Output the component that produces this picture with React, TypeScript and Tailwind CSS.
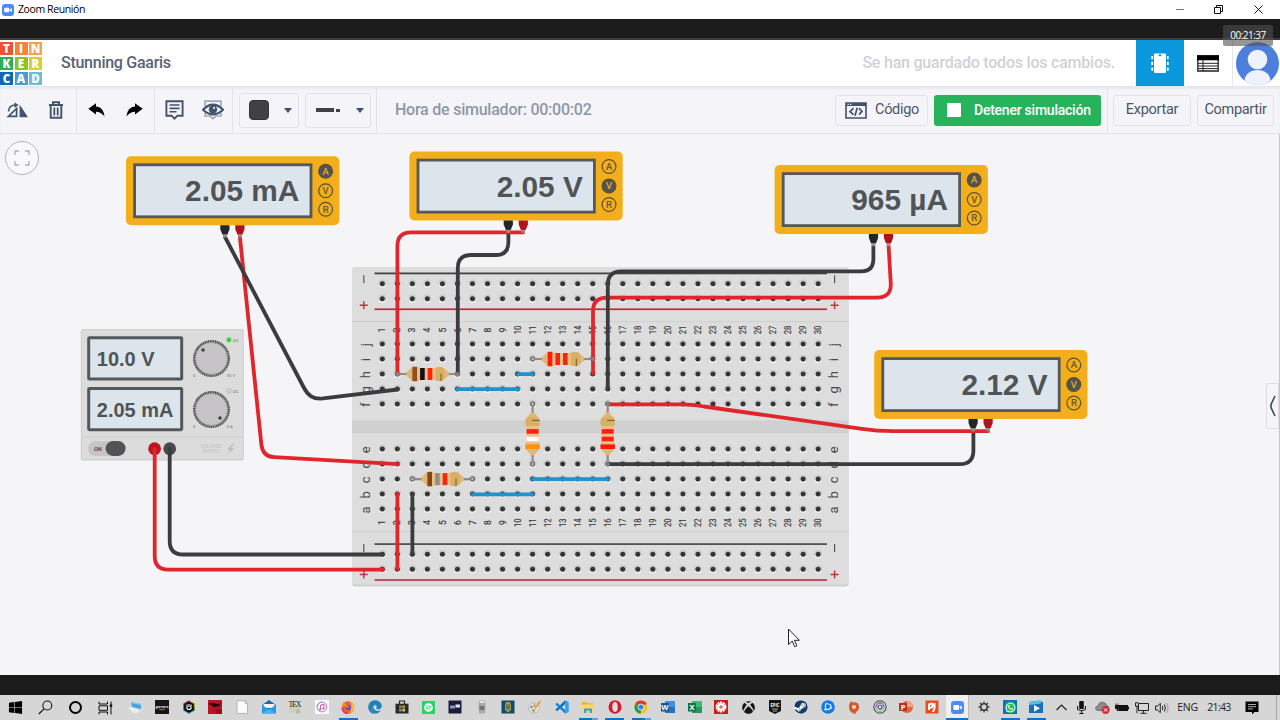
import type { ReactNode } from 'react';
import { FaWindows, FaSpotify, FaXbox, FaSteam, FaWhatsapp, FaEdge } from 'react-icons/fa';

const PITCH = 15.03;
const colX = (n: number) => 382.3 + (n - 1) * PITCH;
const rowY: Record<string, number> = {
  j: 343.9, i: 358.9, h: 373.9, g: 389, f: 404,
  e: 449, d: 464, c: 479.1, b: 494.1, a: 509.1,
};
const rails = [283.7, 298.7, 554.3, 569.3];
const columns = Array.from({ length: 30 }, (_, i) => i + 1);

const RED = '#e0262c';
const BLACK = '#3b3c3f';
const BLUE = '#2092cc';

function Hole({ x, y }: { x: number; y: number }) {
  return (
    <g>
      <circle cx={x} cy={y - 0.3} r={3.9} fill="#cbcbcc" />
      <ellipse cx={x} cy={y + 2} rx={3.4} ry={2} fill="#ededed" />
      <circle cx={x} cy={y} r={2.5} fill="#353538" />
    </g>
  );
}

function Breadboard() {
  return (
    <g>
      <rect x="352" y="267" width="496.5" height="319.5" rx="3" fill="#cfcfd0" />
      <rect x="352" y="267" width="496.5" height="317.5" rx="3" fill="#dddddd" />
      <rect x="352" y="420.5" width="496.5" height="12.5" fill="#d0d0d1" />
      <rect x="352" y="321" width="496.5" height="1.2" fill="#d0d1d3" />
      <rect x="352" y="531" width="496.5" height="1.2" fill="#d0d1d3" />
      <rect x="374.5" y="272.5" width="452.5" height="1.8" fill="#434347" />
      <rect x="374.5" y="308.4" width="452.5" height="1.7" fill="#b62c3d" />
      <rect x="374.5" y="543.2" width="452.5" height="1.8" fill="#525256" />
      <rect x="374.5" y="579.2" width="452.5" height="1.7" fill="#bd3949" />
      {[363.8, 834.6].map((x) => (
        <g key={x}>
          <path d={`M${x} 275.2v8M${x} 544v8`} stroke="#57575a" strokeWidth="1.2" />
          <path d={`M${x} 301.2v8M${x - 4} 305.2h8M${x} 570.5v8M${x - 4} 574.5h8`} stroke="#c22f40" strokeWidth="1.4" />
        </g>
      ))}
      {Object.entries(rowY).map(([name, y]) =>
        [369.5, 838].map((x) => (
          <text key={name + x} transform={`translate(${x} ${y + 0.8}) rotate(-90)`} textAnchor="middle" fontSize="13" fill="#4a4a4d" fontFamily="Roboto, sans-serif">
            {name}
          </text>
        )),
      )}
      {columns.map((n) =>
        [330, 522.7].map((y) => (
          <text key={`${n}-${y}`} transform={`translate(${colX(n) + 3.1} ${y}) rotate(-90)`} textAnchor="middle" fontSize="8.6" textLength={n > 9 ? 8.6 : undefined} lengthAdjust="spacingAndGlyphs" fill="#333336" stroke="#333336" strokeWidth="0.15" fontFamily="Roboto, sans-serif">
            {n}
          </text>
        )),
      )}
      {columns.map((n) => [...rails, ...Object.values(rowY)].map((y) => <Hole key={`${n}-${y}`} x={colX(n)} y={y} />))}
    </g>
  );
}

function Resistor({ x, y, bands, vertical = false }: { x: number; y: number; bands: string[]; vertical?: boolean }) {
  return (
    <g transform={`translate(${x} ${y})${vertical ? ' rotate(-90)' : ''}`}>
      <path d="M-30 0H30" stroke="#8f8c8c" strokeWidth="2.2" strokeLinecap="round" />
      <circle cx="-30" cy="0" r="2.4" fill="#85827f" />
      <circle cx="30" cy="0" r="2.4" fill="#85827f" />
      <circle cx="-30" cy="0" r="1" fill="#c9c7c6" />
      <circle cx="30" cy="0" r="1" fill="#c9c7c6" />
      <path d="M-21 -2C-18 -3-17 -7-13 -7.3C-10 -7.5-9 -6-6 -6H6C9 -6 10 -7.3 13 -7.3C17 -7.3 18 -3 21.5 -2V2C18 3 17 7.3 13 7.3C10 7.3 9 6 6 6H-6C-9 6-10 7.5-13 7.3C-17 7-18 3-21 2Z" fill="#dfb878" />
      <path d="M-10 -6H9V6H-10Z" fill="#eec391" opacity="0.7" />
      <rect x="-15" y="-7.2" width="4.6" height="14.4" fill={bands[0]} />
      <rect x="-7.3" y="-6" width="4.6" height="12" fill={bands[1]} />
      <rect x="0.3" y="-6" width="4.6" height="12" fill={bands[2]} />
      <path d="M8 -6.3Q13 -8.4 17 -5V5Q13 8.4 8 6.3Z" fill="#d8b065" />
      <path d="M13.6 -.5V7" stroke="#80602b" strokeWidth="1.1" />
    </g>
  );
}

function Multimeter({ x, y, value, mode }: { x: number; y: number; value: string; mode: string }) {
  return (
    <g transform={`translate(${x} ${y})`}>
      <rect width="213.3" height="69" rx="5" fill="#f3ae1b" />
      <rect x="8.6" y="8.6" width="176.4" height="52" fill="#dce5eb" stroke="#55585b" strokeWidth="2.8" />
      <text x="173.4" y="45" textAnchor="end" fontSize="29.8" fontWeight="700" fill="#515457" fontFamily="'Liberation Sans', sans-serif">
        {value}
      </text>
      {['A', 'V', 'R'].map((m, i) => (
        <g key={m} transform={`translate(199.6 ${[15, 34.5, 53][i]})`}>
          <circle r="6.9" fill={m === mode ? '#525355' : 'none'} stroke="#5a5136" strokeWidth="1.2" />
          <text y="3.4" textAnchor="middle" fontSize="9.5" fill={m === mode ? '#f3ae1b' : '#5a5136'} stroke={m === mode ? '#f3ae1b' : '#5a5136'} strokeWidth="0.2" fontFamily="Roboto, sans-serif">
            {m}
          </text>
        </g>
      ))}
    </g>
  );
}

function Probes({ x, y }: { x: number; y: number }) {
  return (
    <g>
      {[{ dx: 98.9, c: '#252627' }, { dx: 113.9, c: '#b0141b' }].map(({ dx, c }) => (
        <g key={c} transform={`translate(${x + dx} ${y + 69})`}>
          <path d="M-4.6 0H4.6V4L2.4 9.5H-2.4L-4.6 4Z" fill={c} />
          <rect x="-1.8" y="9.3" width="3.6" height="3" fill="#9b8b8b" />
        </g>
      ))}
    </g>
  );
}

function Knob({ y, dot, max, on }: { y: number; dot: [number, number]; max: string; on: boolean }) {
  return (
    <g transform={`translate(211.5 ${y})`}>
      <circle r="17.2" fill="#c6c4c7" stroke="#47484a" strokeWidth="2.6" strokeDasharray="1.2 .55" />
      <circle r="16" fill="#c6c4c7" stroke="#8b8a8d" strokeWidth=".6" />
      <circle cx={dot[0]} cy={dot[1]} r="1.8" fill="#414245" />
      <circle cx="17.4" cy={-18.6} r="2.3" fill={on ? '#2fd62f' : '#d5d5d5'} stroke={on ? '#66dc63' : '#aaa'} strokeWidth=".6" />
      <g fontFamily="Roboto, sans-serif" fontSize="4.4" fill="#747476">
        <text x="21.5" y="-17">DC</text>
        <text x="-18.5" y="18.5">0</text>
        <text x="15" y="18.5">{max}</text>
      </g>
    </g>
  );
}

function PowerSupply() {
  return (
    <g>
      <rect x="80.8" y="329" width="163" height="131.5" rx="2.5" fill="#cfcfd0" />
      <rect x="81.8" y="330" width="161" height="129" rx="2" fill="#dcdcdc" />
      <rect x="81.8" y="436.4" width="161" height="1" fill="#cfcfd0" />
      {[{ y: 336.3, t: '10.0 V' }, { y: 387, t: '2.05 mA' }].map(({ y, t }) => (
        <g key={t}>
          <rect x="88.7" y={y + 1.4} width="93" height="41.3" rx=".6" fill="#dce5eb" stroke="#55585b" strokeWidth="3" />
          <text x="96.8" y={y + 29.5} fontSize="20" fontWeight="700" fill="#515457" fontFamily="'Liberation Sans', sans-serif">
            {t}
          </text>
        </g>
      ))}
      <Knob y={358.5} dot={[-8.5, -8.5]} max="30 V" on />
      <Knob y={409.5} dot={[8.5, 8.5]} max="5 A" on={false} />
      <rect x="88" y="441.3" width="37" height="14.6" rx="7.3" fill="#c5c5c8" />
      <text x="94" y="451.2" fontSize="5.6" fontWeight="700" fill="#4c4d50" fontFamily="Roboto, sans-serif">ON</text>
      <rect x="105.6" y="441" width="20" height="15" rx="7.4" fill="#525355" />
      <circle cx="154.6" cy="448.7" r="6.4" fill="#bd161e" />
      <circle cx="169.7" cy="448.7" r="6.4" fill="#4b4b4e" />
      <g fontFamily="Roboto, sans-serif" fontSize="5" fontWeight="500" fill="#c4c4c7" textAnchor="middle">
        <text x="211" y="447.6">VOLTAGE</text>
        <text x="211" y="453.2">SUPPLY</text>
      </g>
      <path d="M233 443.5l-6 6.2h3.6l-3.2 4.5 7.2-6h-3.8l3.6-4.7z" fill="#bcbcbf" />
    </g>
  );
}

function Wire({ d, color }: { d: string; color: string }) {
  return <path d={d} fill="none" stroke={color} strokeWidth="3.8" strokeLinecap="round" strokeLinejoin="round" />;
}

const meters = [
  { x: 126, y: 156.2, value: '2.05 mA', mode: 'A' },
  { x: 409.4, y: 151.5, value: '2.05 V', mode: 'V' },
  { x: 774.6, y: 165, value: '965 µA', mode: 'A' },
  { x: 874.2, y: 350, value: '2.12 V', mode: 'V' },
];

function Circuit() {
  return (
    <svg className="block h-[541px] w-[1280px]" viewBox="0 134 1280 541">
      <Breadboard />
      <PowerSupply />
      {meters.map((m) => <Multimeter key={m.x} {...m} />)}
      <Resistor x={427.4} y={374} bands={['#8f4f21', '#111', '#ff2410']} />
      <Resistor x={562.7} y={359} bands={['#ff1a0a', '#ff2410', '#ff2410']} />
      <Resistor x={442.4} y={479.1} bands={['#85431c', '#8d8d8d', '#ff2410']} />
      <Resistor x={532.6} y={434} bands={['#ff930f', '#fff', '#ff2016']} vertical />
      <Resistor x={607.7} y={434} bands={['#ff1a0a', '#ff2410', '#ff2016']} vertical />
      <Wire color={BLUE} d="M457.5 389.2H518.5" />
      <Wire color={BLUE} d="M518 374.1H533" />
      <Wire color={BLUE} d="M533 479.2H608" />
      <Wire color={BLUE} d="M472.5 494.3H532.7" />
      <Wire color={RED} d="M397.4 494V569" />
      <Wire color={BLACK} d="M412.4 494V554.5" />
      <Wire color={BLACK} d="M508.4 231V242Q508.4 255 496 255H471Q457.8 255 457.8 268V373.5" />
      <Wire color={RED} d="M523 232.4H411Q397.4 232.4 397.4 246V373.5" />
      <Wire color={RED} d="M239.9 237L261.3 444Q262.5 456.5 274 457.2L398 464.2" />
      <Wire color={BLACK} d="M225 237L303 386C308 396 313 399.3 323 398.4L397.5 389.5" />
      <Wire color={RED} d="M888.6 246L890.8 284Q891 297.6 877 297.6H607Q593 297.6 593 311V373.5" />
      <Wire color={BLACK} d="M873.4 246V259Q873.4 271.4 861 271.4H621Q607.8 271.4 607.8 285V389" />
      <Wire color={BLACK} d="M973.4 430V451Q973 464.2 960 464.2H608.5" />
      <Wire color={RED} d="M988 431.2H893Q877 431 862 428.8L704 406.5Q693 404.3 680 404.3H609" />
      <Wire color={RED} d="M154.7 449V556Q154.7 569.6 168 569.6H383" />
      <Wire color={BLACK} d="M169.7 449V541Q169.7 554.5 183 554.5H383" />
      {meters.map((m) => <Probes key={m.x} x={m.x} y={m.y} />)}
      <g fill="#858284">
        {[[397.4, 374], [457.8, 374], [592.9, 359], [607.8, 404], [607.8, 464.2]].map(([x, y]) => (
          <circle key={`${x}${y}`} cx={x} cy={y} r="2" />
        ))}
      </g>
      <path d="M788.5 629v15.6l3.7-3.5 2.5 5.6 2.2-1-2.5-5.4h5z" fill="#fff" stroke="#222" strokeWidth="1" />
    </svg>
  );
}

const logo = [
  ['T', 'bg-[#f2512f]'], ['I', 'bg-[#f6803e]'], ['N', 'bg-[#f9a04f]'],
  ['K', 'bg-[#2fae55]'], ['E', 'bg-[#8fc31f]'], ['R', 'bg-[#d9cc3c]'],
  ['C', 'bg-[#0f68b4]'], ['A', 'bg-[#4a9bd0]'], ['D', 'bg-[#6fbbd8]'],
];

function Header() {
  return (
    <header className="flex h-[47px] shrink-0 items-stretch border-b border-[#e3e3e8] bg-white">
      <div className="mt-[2px] grid h-[43px] w-[42px] grid-cols-3 grid-rows-3 gap-[1.5px]">
        {logo.map(([letter, bg]) => (
          <span key={letter} className={`flex items-center justify-center font-['Open_Sans',sans-serif] text-[11.5px] leading-none font-extrabold text-white ${bg}`}>
            {letter}
          </span>
        ))}
      </div>
      <h1 className="ml-[19px] flex-1 self-center text-[16px] font-medium tracking-[-0.27px] text-[#596375]">Stunning Gaaris</h1>
      <p className="mr-[21px] self-center text-[16px] font-medium tracking-[-0.22px] text-[#ced2d9]">Se han guardado todos los cambios.</p>
      <div className="flex w-[48px] items-center justify-center bg-[#0a97dc]">
        <svg width="20" height="22" viewBox="0 0 20 22">
          <rect x="4" y="1.5" width="12" height="19.5" rx="1.2" fill="#fff" />
          <path d="M8.5 2.5h3v1.6h-3z" fill="#0a97dc" />
          <path d="M2.2 4v15M17.8 4v15" stroke="#fff" strokeWidth="1.8" strokeDasharray="3.2 2.6" />
        </svg>
      </div>
      <div className="flex w-[49px] items-center justify-center border-r border-[#e6e6ea]">
        <svg width="22" height="17" viewBox="0 0 22 17">
          <path d="M.8 1h20.4v15H.8z" fill="#fff" stroke="#222" strokeWidth="1.3" />
          <path d="M0 .3h22v5H0z" fill="#000" />
          <path d="M1 8.300h20M1 11h20M1 13.600h20M6 5v11" stroke="#222" strokeWidth="1" />
        </svg>
      </div>
      <div className="flex w-[47px] items-center overflow-hidden pl-[3px]">
        <svg width="44" height="43" viewBox="0 0 44 43">
          <circle cx="21.5" cy="21.5" r="21.5" fill="#4b7fdb" />
          <circle cx="21.5" cy="17.500" r="9.8" fill="#eef2fc" />
          <path d="M8.5 38.5c1-14 25-14 26 0q-13 9-26 0z" fill="#eef2fc" />
        </svg>
      </div>
    </header>
  );
}

function Caret() {
  return <span className="h-0 w-0 border-x-4 border-t-5 border-x-transparent border-t-[#3f5370]" />;
}

function Toolbar() {
  return (
    <div className="flex h-[47px] shrink-0 items-center border-b border-[#e3e3e9] bg-[#f5f5f9] text-[#4a5568] shadow-[inset_0_2px_2px_rgba(200,200,215,0.25)]">
      <div className="flex h-full w-[77px] items-center border-r border-[#e3e3e9] pl-[6px]">
        <svg width="23" height="17" viewBox="0 0 23 17">
          <path d="M13.6 2.4L22 15.2H13.6z" fill="#42526a" />
          <path d="M10.6 6.5L2.4 14.4h8.2z" fill="none" stroke="#42526a" strokeWidth="1.7" />
          <path d="M2.5 9.5Q3 3 9.6 3" fill="none" stroke="#42526a" strokeWidth="1.6" />
          <path d="M8.5 .2l4 2.8-4 2.9z" fill="#42526a" />
        </svg>
        <svg className="ml-[19px]" width="16" height="18" viewBox="0 0 16 18">
          <path d="M1 4h14M5 3.5V1.2h6v2.3M2.7 4.5v12.2h10.6V4.5" fill="none" stroke="#42526a" strokeWidth="1.9" />
          <path d="M6.3 6.5v8M9.7 6.5v8" stroke="#42526a" strokeWidth="1.8" />
        </svg>
      </div>
      <div className="flex h-full w-[78px] items-center border-r border-[#e3e3e9] pl-[11px] text-black">
        <svg width="17" height="14" viewBox="0 0 17 14">
          <path d="M.3 5.700L8 .3v3.300Q15.500 4.200 16.600 13.500 13 8.800 8 8.800v2.700z" fill="#000" />
        </svg>
        <svg className="ml-[21px]" width="17" height="14" viewBox="0 0 17 14">
          <path d="M16.700 5.700L9 .3v3.300Q1.500 4.200 .4 13.500 4 8.800 9 8.800v2.700z" fill="#000" />
        </svg>
      </div>
      <div className="flex h-full w-[78px] items-center border-r border-[#e3e3e9] pl-[10px]">
        <svg width="19" height="20" viewBox="0 0 19 20">
          <path d="M1.4 1.2h16.2v14.5h-5.2L9.5 18.6l-2.9-2.9H1.4z" fill="none" stroke="#42526a" strokeWidth="1.9" />
          <path d="M4.5 5h10M4.5 8.4h10M4.5 11.8h7" stroke="#42526a" strokeWidth="1.6" />
        </svg>
        <svg className="ml-[18px]" width="22" height="20" viewBox="0 0 22 20">
          <path d="M3 6V1.2h16V6M3 13v3h5l3 2.7 3-2.7h5v-3" fill="none" stroke="#a0aab7" strokeWidth="1.7" />
          <path d="M1 9.7Q11-.5 21 9.7Q11 19 1 9.7z" fill="#f5f5f9" stroke="#42526a" strokeWidth="2.200" />
          <circle cx="11" cy="9.400" r="4.2" fill="#42526a" />
          <circle cx="12" cy="8" r="1.1" fill="#f5f5f9" />
        </svg>
      </div>
      <div className="flex h-full w-[144px] items-center gap-[6px] border-r border-[#e3e3e9] pl-[6px]">
        <div className="flex h-[35px] w-[60px] items-center rounded-[3px] border border-[#e2e2e8] pl-[9px]">
          <span className="mr-[15px] h-[20px] w-[20px] rounded-[4px] border border-[#333437] bg-[#404144]" />
          <Caret />
        </div>
        <div className="flex h-[35px] w-[66px] items-center rounded-[3px] border border-[#e2e2e8] pl-[10px]">
          <span className="mr-[2px] h-[4px] w-[18px] bg-[#404144]" />
          <span className="mr-[16px] h-[3px] w-[4px] bg-[#404144]" />
          <Caret />
        </div>
      </div>
      <p className="ml-[18px] flex-1 text-[16px] font-medium tracking-[-0.23px] text-[#8d97a6]">Hora de simulador: 00:00:02</p>
      <div className="flex h-[31px] w-[93px] items-center rounded-[3px] border border-[#e2e2e8] pl-[9px] text-[14.5px] tracking-[-0.3px]">
        <svg className="mr-[8px]" width="22" height="17" viewBox="0 0 22 17">
          <path d="M1 1h20v15H1z" fill="none" stroke="#42526a" strokeWidth="1.6" />
          <path d="M1 1h20v3H1z" fill="#42526a" />
          <path d="M2.5 2.4h1.3M5 2.4h1.3" stroke="#f5f5f9" strokeWidth="1.2" />
          <path d="M8.5 6.2L5 9.6l3.5 3M14 6.2l3 3.2-3 3.2M12.2 5.8l-2.2 8" fill="none" stroke="#42526a" strokeWidth="1.7" />
        </svg>
        Código
      </div>
      <div className="ml-[6px] flex h-[31px] w-[167px] items-center rounded-[3px] bg-[#27b35b] pl-[13px] text-[14px] font-medium tracking-[-0.24px] whitespace-nowrap text-white">
        <span className="mr-[13px] h-[14px] w-[14px] rounded-[1px] bg-white" />
        Detener simulación
      </div>
      <div className="ml-[6px] flex h-full items-center gap-[6px] border-l border-[#e3e3e9] pr-[6px] pl-[5px] text-[14.5px] tracking-[-0.3px]">
        <div className="flex h-[31px] w-[78px] items-center justify-center rounded-[3px] border border-[#e2e2e8]">Exportar</div>
        <div className="flex h-[31px] w-[77px] items-center justify-center rounded-[3px] border border-[#e2e2e8]">Compartir</div>
      </div>
    </div>
  );
}

function Glyph({ children }: { children: ReactNode }) {
  return <svg width="14" height="14" viewBox="0 0 14 14">{children}</svg>;
}

function Letter({ bg, dark, letter }: { bg: string; dark: string; letter: string }) {
  return (
    <Glyph>
      <path d="M4 1h10v12H4z" fill={bg} />
      <path d="M4 7h10v6H4z" fill={dark} opacity=".55" />
      <path d="M0 3h8v8.5H0z" fill={dark} />
      <text x="4" y="9.8" fontSize="7.5" fontWeight="700" fill="#fff" textAnchor="middle" fontFamily="'Open Sans', sans-serif">{letter}</text>
    </Glyph>
  );
}

type App = { icon: ReactNode; running?: boolean; grouped?: boolean };

const apps: App[] = [
  { icon: <Glyph><path d="M3 2l10 2v5L4 7z" fill="#4ba3dc" /><path d="M3 2l10 2v1L3 3z" fill="#92cdf0" /><path d="M0 8l4-1 8 3.500-2 2-4 .5z" fill="#e9eef2" /></Glyph> },
  { icon: <Glyph><path d="M0 0h14v14H0z" fill="#151617" /><text x="7" y="7.600" fontSize="4" fontWeight="700" fill="#ddd" textAnchor="middle" fontFamily="'Open Sans', sans-serif">games</text><path d="M4 9q3 1.500 6 0" stroke="#c99232" strokeWidth=".8" fill="none" /></Glyph> },
  { icon: <Glyph><path d="M7 .5l5.600 3.200v6.600L7 13.500l-5.600-3.200V3.700z" fill="#111" /><path d="M7 .7l5.400 3v3.500" stroke="#e6b51e" fill="none" /><path d="M1.600 7V3.700L7 .7" stroke="#de3a87" fill="none" /><path d="M1.600 7v3.300L7 13.400" stroke="#3d8ee0" fill="none" /><path d="M12.400 7v3.300L7 13.400" stroke="#36ba56" fill="none" /><path d="M5 4.500v4q2 2 4 0v-4M7 4v3" stroke="#fff" strokeWidth="1.100" fill="none" /></Glyph> },
  { icon: <Glyph><path d="M0 0h14v14H0z" fill="#bb1328" /><path d="M0 3.500l6-.5 2 1 6-.5-4 2 3 1-5 0-3 1.500L5 6z" fill="#240609" /><path d="M7 9h7v5H9z" fill="#930f21" /></Glyph> },
  { icon: <Glyph><path d="M2 .7h8l2.500 2.500v10.300H2z" fill="#fafafa" stroke="#aaa" strokeWidth=".8" /><path d="M10 .7v2.500h2.500" fill="none" stroke="#999" strokeWidth=".7" /></Glyph> },
  { icon: <Glyph><path d="M0 5l7-5 7 5v8H0z" fill="#1769b1" /><path d="M1.500 4h11v4h-11z" fill="#eef4f8" /><path d="M0 5l7 4.500L14 5v8.500H0z" fill="#2b9ae0" /><path d="M0 13.500L7 9l7 4.500z" fill="#45b5ef" /></Glyph> },
  { icon: <Glyph><path d="M1 5h11v8.500H1z" fill="#cfcfc4" /><text x="7" y="7" fontSize="8" fill="#222" textAnchor="middle" fontFamily="'Liberation Serif', serif" textLength="13">TEX</text><circle cx="10" cy="11.500" r="2.200" fill="#b6c382" /></Glyph> },
  { icon: <Glyph><path d="M0 0h14v14H0z" fill="#fbf8fb" /><circle cx="7" cy="7" r="4.900" fill="none" stroke="#b27be2" strokeWidth="1" /><path d="M2.100 7a4.900 4.900 0 0 1 4.900-4.900" stroke="#5dafe9" fill="none" /><path d="M5.600 9.500V5l3.400-.8v4.500" stroke="#e4518b" fill="none" strokeWidth="1" /><circle cx="5" cy="9.400" r="1" fill="#e4518b" /><circle cx="8.400" cy="8.800" r="1" fill="#a35fd6" /></Glyph> },
  { running: true, icon: <Glyph><circle cx="7" cy="7.500" r="6.300" fill="#f6602e" /><path d="M9 1q5 3 4.200 8Q11 13 8 13q4-3 1-12z" fill="#fdbb35" /><path d="M1 7Q1 3 3 2q0 2 3 2.500" fill="#fb8e2e" /><path d="M1 8q1 5 6 5.800" stroke="#e72f63" fill="none" strokeWidth="1.500" /><circle cx="7.200" cy="7.600" r="2.900" fill="#7a4bc9" /><path d="M4 6q2-1 4 .5l-2 1z" fill="#fb9a31" /></Glyph> },
  { icon: <FaEdge className="h-[14px] w-[14px] text-[#1d82bd]" /> },
  { icon: <Glyph><path d="M4.500 4V1h5v3" stroke="#292929" fill="none" strokeWidth="1.200" /><path d="M.5 3.700h13v9.800H.5z" fill="#2c2a28" /><path d="M4 5.500h2.700v2.700H4z" fill="#e9563d" /><path d="M7.300 5.500H10v2.700H7.300z" fill="#7ab83d" /><path d="M4 8.800h2.700v2.700H4z" fill="#36a3dd" /><path d="M7.300 8.800H10v2.700H7.300z" fill="#f3ba2b" /></Glyph> },
  { icon: <span className="flex h-[13px] w-[13px] items-center justify-center bg-[#29d366] text-white"><FaSpotify size={9} /></span> },
  { icon: <Glyph><path d="M.5 .5h13v13H.5z" fill="#1b1c3b" /><path d="M2 5.500h5v3H2z" fill="#8c94ba" /><path d="M7.500 4.500h4.500v3H7.500z" fill="#e2e4ee" /></Glyph> },
  { icon: <Glyph><path d="M4.500 .5h5l1 2-.5 11H4L3.500 2.500z" fill="#a9a9a7" /><path d="M4.700 1h4.600v2H4.700z" fill="#e5e5e2" /><path d="M4.500 6h5v4h-5z" fill="#767572" /></Glyph> },
  { icon: <Glyph><path d="M.5 .5h13v13H.5z" fill="#124b6b" /><path d="M5 2h4l1 3v5l-3 2.500L4 10V5z" fill="#a49b4f" /><path d="M6 4v6M8 4v6M5 7h4" stroke="#284f56" strokeWidth=".7" /></Glyph> },
  { icon: <Glyph><ellipse cx="6" cy="8" rx="5.700" ry="5" fill="#e6ded0" stroke="#a89c88" strokeWidth=".5" /><circle cx="3.500" cy="7" r="1.200" fill="#4292d3" /><circle cx="5.500" cy="10.500" r="1.200" fill="#50ac59" /><circle cx="6.500" cy="5.500" r="1" fill="#db5549" /><path d="M12.500 1L7 8.500" stroke="#d79a38" strokeWidth="1.500" /></Glyph> },
  { icon: <Glyph><path d="M10.200 .3L13.700 2v10l-3.500 1.700z" fill="#28a3ec" /><path d="M10.200 .3v3.800L2 11.200.3 9.800z" fill="#0e71b7" /><path d="M10.200 13.700V9.900L2 2.800.3 4.200z" fill="#1286ce" /></Glyph> },
  { running: true, grouped: true, icon: <Glyph><path d="M1 2h4.500l1 1.300H12V7H1z" fill="#eeb32e" /><path d="M.8 4.500h12v8.300H.8z" fill="#fbd868" /><path d="M3 13V8.500h8V13H8.700v-2.500H5.300V13z" fill="#3e9de0" /></Glyph> },
  { running: true, icon: <Glyph><ellipse cx="7" cy="7" rx="6.500" ry="6.800" fill="#d51b2f" /><ellipse cx="7" cy="7" rx="2.700" ry="4.900" fill="#e0dedf" /></Glyph> },
  { running: true, grouped: true, icon: <Glyph><circle cx="7" cy="7" r="6.600" fill="#f8c51c" /><path d="M7 7L1.300 3.700A6.600 6.600 0 0 1 12.700 3.700z" fill="#e1392e" /><path d="M7 7L1.300 3.700A6.600 6.600 0 0 0 6.800 13.600z" fill="#249b50" /><circle cx="7" cy="7" r="3.200" fill="#f4f4f4" /><circle cx="7" cy="7" r="2.500" fill="#3c80e6" /></Glyph> },
  { icon: <Letter bg="#3e91dc" dark="#1b559f" letter="W" /> },
  { icon: <Letter bg="#3abb78" dark="#187445" letter="X" /> },
  { icon: <Glyph><path d="M0 0h14v14H0z" fill="#d11a18" /><circle cx="7" cy="7" r="4" fill="none" stroke="#fff" strokeWidth="3" strokeDasharray="2 .5" /><circle cx="7" cy="7" r="3.500" fill="#fff" /><path d="M5 7h4M7 5v4" stroke="#d11a18" strokeWidth=".8" /></Glyph> },
  { icon: <FaXbox className="h-[13px] w-[13px] text-[#141414]" /> },
  { icon: <Glyph><path d="M1 0h12v11L7 14l-6-3z" fill="#171717" /><text x="7" y="6.800" fontSize="6" fontWeight="700" fill="#fff" textAnchor="middle" textLength="9" lengthAdjust="spacingAndGlyphs" fontFamily="'Open Sans', sans-serif">EPIC</text><path d="M4 9h6M5 11h4" stroke="#ccc" strokeWidth=".8" /></Glyph> },
  { icon: <FaSteam className="h-[14px] w-[14px] rounded-full bg-white text-[#173c69]" /> },
  { icon: <Glyph><circle cx="7" cy="7" r="6.800" fill="#1479e8" /><path d="M5 3.500q7 1 4.500 4-2 3.500-5 1Q4 6 5 3.500zM3 9.500q5 1 8-2" fill="none" stroke="#d9edff" strokeWidth="1.200" /></Glyph> },
  { icon: <Glyph><path d="M5 1l-.5 1.600Q12 1 12 7q0 4-3.500 5L9 14Q2 13 2 7q0-5 3-6z" fill="#dd5628" /><circle cx="7" cy="7" r="2" fill="#ddd" /></Glyph> },
  { icon: <Glyph><circle cx="7" cy="7" r="6.200" fill="#ececef" stroke="#55565e" strokeWidth="1.200" /><circle cx="7" cy="7" r="4.300" fill="none" stroke="#4fa568" /><path d="M3 7a4 4 0 0 1 8 0" fill="none" stroke="#b54ab8" /><circle cx="7" cy="7" r="2" fill="none" stroke="#39427d" strokeWidth="1.200" /></Glyph> },
  { icon: <Glyph><circle cx="8" cy="7" r="6" fill="#e3633f" /><path d="M8 1a6 6 0 0 1 6 6H8z" fill="#f3a182" /><path d="M0 3h8v8H0z" fill="#b9321c" /><text x="4" y="9.800" fontSize="7.500" fontWeight="700" fill="#fff" textAnchor="middle" fontFamily="'Open Sans', sans-serif">P</text></Glyph> },
  { icon: <Glyph><path d="M.5 .5h13v13H.5z" fill="#ed4c1c" /><path d="M4 10V4.500q4-2 3.500 1T4 7.500M9.500 3v5l-1.500 4" stroke="#fff" strokeWidth="2" fill="none" /></Glyph> },
];

function TaskSlot({ app, width }: { app: App; width: string }) {
  return (
    <div className={`flex h-full flex-col items-center ${width}`}>
      <span className="flex flex-1 items-center pt-[1px]">{app.icon}</span>
      <span className="flex h-[2px] w-[19px]">
        {app.running && <span className="flex-1 bg-[#0b73ca]" />}
        {app.grouped && <span className="w-[6px] bg-[#5aa3dc]" />}
      </span>
    </div>
  );
}

function ZoomLogo({ size }: { size: number }) {
  return (
    <svg width={size} height={size} viewBox="0 0 12 12">
      <rect width="12" height="12" rx="3" fill="#4a8cf5" />
      <rect x="2.200" y="3.800" width="5.200" height="4.400" rx="1" fill="#fff" />
      <path d="M7.900 5.500l2-1.400v3.800l-2-1.400z" fill="#fff" />
    </svg>
  );
}

function Taskbar() {
  return (
    <footer className="flex h-[25px] shrink-0 items-stretch bg-[#d6d6d6] font-['Open_Sans',sans-serif] text-[12px] text-[#222]">
      <div className="flex w-[122px] items-center *:w-[30px]">
        <span className="flex justify-center"><FaWindows className="h-[15px] w-[15px] text-black" /></span>
        <span className="flex justify-center"><svg width="15" height="15" viewBox="0 0 15 15"><circle cx="9.300" cy="5.500" r="4.500" fill="none" stroke="#111" strokeWidth="1.100" /><path d="M6 8.800L.8 14" stroke="#111" strokeWidth="1.100" /></svg></span>
        <span className="flex justify-center"><span className="h-[13px] w-[13px] rounded-full border-[2px] border-black" /></span>
        <span className="flex justify-center"><svg width="15" height="14" viewBox="0 0 15 14"><path d="M1 .5v2.500h8.500V.5M1 13.500V11h8.500v2.500M1 4.800h8.500v4.500H1zM13 .5v13" fill="none" stroke="#111" /><path d="M11.800 3.500h2.400v2.400h-2.400z" fill="#111" /></svg></span>
      </div>
      <div className="flex">
        {apps.slice(0, 27).map((app, i) => <TaskSlot key={i} app={app} width="w-[26.65px]" />)}
        {apps.slice(27).map((app, i) => <TaskSlot key={i} app={app} width="w-[26px]" />)}
      </div>
      <div className="ml-[1px] flex w-[23px] flex-col items-center border-r border-[#bdbdbd] bg-[#efefef]">
        <span className="flex flex-1 items-center pt-[1px]"><ZoomLogo size={13} /></span>
        <span className="h-[2px] w-full bg-[#0b73ca]" />
      </div>
      <div className="ml-[2px] flex">
        <TaskSlot width="w-[26px]" app={{ icon: <Glyph><circle cx="7" cy="7" r="3.200" fill="none" stroke="#3e3e3e" strokeWidth="1.500" /><path d="M7 1.500v2M7 10.500v2M1.500 7h2M10.500 7h2M3.100 3.100l1.400 1.400M9.500 9.500l1.400 1.400M3.100 10.900l1.400-1.400M9.500 4.500l1.400-1.400" stroke="#3e3e3e" strokeWidth="1.400" /></Glyph> }} />
        <TaskSlot width="w-[26px]" app={{ running: true, icon: <span className="flex h-[14px] w-[14px] items-center justify-center bg-[#0c74bf]"><FaWhatsapp className="rounded-full bg-[#33bf56] text-white" size={11} /></span> }} />
        <TaskSlot width="w-[26px]" app={{ running: true, icon: <Glyph><path d="M0 2l11-1.500 3 2V13H0z" fill="#1870bd" /><path d="M0 2l12-1.500v3L0 5z" fill="#57c0ed" /><path d="M5 5l6 3.300-6 3.500z" fill="#fff" /></Glyph> }} />
      </div>
      <div className="flex flex-1 items-center">
        <svg className="ml-[7px]" width="11" height="7" viewBox="0 0 11 7"><path d="M.5 6l5-5 5 5" fill="none" stroke="#222" strokeWidth="1.200" /></svg>
        <svg className="ml-[10px]" width="9" height="13" viewBox="0 0 9 13"><rect x="2.200" y="0" width="4.600" height="8" rx="1" fill="#111" /><path d="M.6 5v3.500q4 2.600 7.800 0V5M4.500 10v2.500M2.300 12.500h4.400" fill="none" stroke="#111" /></svg>
        <svg className="ml-[9px]" width="15" height="13" viewBox="0 0 15 13"><path d="M3 9.500Q0 9 .7 6.500 1.500 5 3 5 4 .8 7.500 1.200 11 1.500 11.500 4.500q3 .5 2.500 3.500 0 1.500-2 1.500z" fill="#8c8c8c" stroke="#555" strokeWidth=".7" /><circle cx="10.600" cy="9" r="3.900" fill="#d42b38" /><path d="M9 7.400l3.200 3.200M12.200 7.400L9 10.600" stroke="#fff" /></svg>
        <svg className="ml-[5px]" width="14" height="11" viewBox="0 0 14 11"><path d="M3.500 3H13v6H3.500z" fill="#111" /><path d="M13 5h1v2h-1zM0 3.500h4v3H0zM1 1.500v2M3 1.500v2M2 6v2.500h2" fill="#111" stroke="#111" strokeWidth=".8" /></svg>
        <svg className="ml-[6px]" width="14" height="12" viewBox="0 0 14 12"><path d="M3.500 1.500h10v7h-10zM8.500 8.500v2.700M5.500 11.300h6M.5.800h3M.5.800v3.400h3M2 4.200v7" fill="none" stroke="#222" /></svg>
        <svg className="ml-[6px]" width="14" height="12" viewBox="0 0 14 12"><path d="M.6 4h2l2.700-2.700v9.400L2.600 8h-2z" fill="none" stroke="#222" /><path d="M7.300 4q1.300 2 0 4M9.300 2.500q2.300 3.500 0 7" fill="none" stroke="#222" /><path d="M11.300 1q3.500 5 0 10" fill="none" stroke="#999" /></svg>
        <span className="ml-[8px] w-[21px] text-[10.5px] tracking-[-0.3px]">ENG</span>
        <span className="ml-[9px] w-[26px] text-[10.5px] tracking-[-0.7px]">21:43</span>
        <svg className="ml-[12px]" width="14" height="14" viewBox="0 0 14 14"><path d="M.5 .5h13v10.500H9.500L7 13.500V11H.5z" fill="#050505" /><path d="M3 3.500h8M3 5.700h8M3 7.900h5" stroke="#d6d6d6" strokeWidth=".8" /></svg>
      </div>
      <div className="mr-[3px] w-px bg-[#aaa]" />
    </footer>
  );
}

export default function App() {
  return (
    <div className="relative flex h-[720px] w-[1280px] flex-col overflow-hidden bg-[#1b1b1b] font-[Roboto,sans-serif]">
      <div className="flex h-[19px] shrink-0 items-center bg-white pl-[2px]">
        <ZoomLogo size={12} />
        <span className="ml-[4px] flex-1 font-['Open_Sans',sans-serif] text-[10.5px] leading-none tracking-[-0.4px] text-black">Zoom Reunión</span>
        <svg className="mr-[30px]" width="8" height="9" viewBox="0 0 8 9"><path d="M0 4.500h8" stroke="#777" /></svg>
        <svg className="mr-[31px]" width="9" height="9" viewBox="0 0 9 9"><path d="M.5 2.500h6v6h-6zM2.500 2.500v-2h6v6h-2" fill="none" stroke="#111" /></svg>
        <svg className="mr-[17px]" width="9" height="9" viewBox="0 0 9 9"><path d="M.5.5l8 8M8.500.5l-8 8" stroke="#111" /></svg>
      </div>
      <div className="h-[21px] shrink-0 border-b-2 border-[#3c3c3c]" />
      <Header />
      <Toolbar />
      <main className="relative h-[541px] shrink-0 border-r border-[#c6c6c9] bg-[#f5f5f8]">
        <Circuit />
        <button className="absolute top-[7px] left-[5px] flex h-[34px] w-[34px] items-center justify-center rounded-full border-[1.5px] border-[#b2b4bb] bg-white/40">
          <svg width="16" height="16" viewBox="0 0 16 16"><path d="M1 5V1h4M11 1h4v4M15 11v4h-4M5 15H1v-4" fill="none" stroke="#aeb1b8" strokeWidth="1.300" /></svg>
        </button>
        <div className="absolute top-[249px] right-0 flex h-[46px] w-[13px] items-center justify-center rounded-l-[3px] border border-[#dcdce2] bg-[#f5f5f9]">
          <svg width="7" height="22" viewBox="0 0 7 22"><path d="M6 1L2 9.500v3L6 21" fill="none" stroke="#3d485a" strokeWidth="1.600" /></svg>
        </div>
      </main>
      <div className="h-[20px] shrink-0" />
      <Taskbar />
      <div className="absolute top-[25px] left-[1223px] flex h-[21px] w-[50px] items-center justify-center rounded-[2px] bg-[#505050]/60 font-['Open_Sans',sans-serif] text-[10px] tracking-[-0.5px] text-white">
        00:21:37
      </div>
    </div>
  );
}
